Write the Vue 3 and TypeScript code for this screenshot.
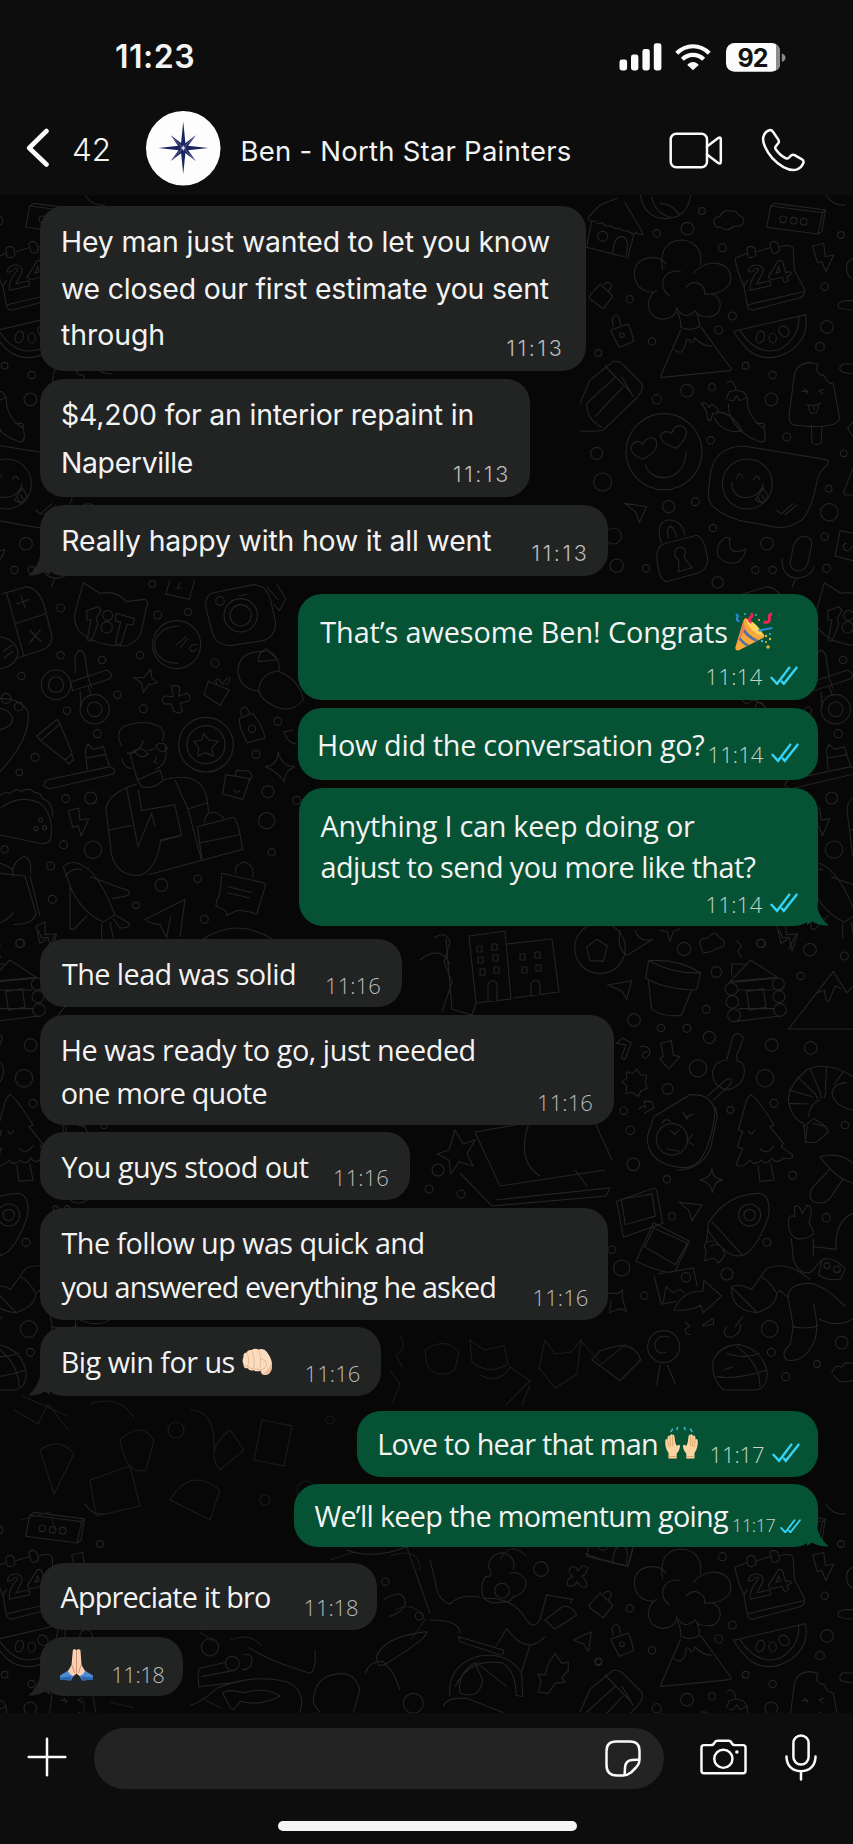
<script setup lang="ts">
import { onMounted, ref } from 'vue'

type Emoji = 'party' | 'fist' | 'hands' | 'pray'

interface Line {
  text: string
  width: number
}

interface Message {
  mine?: boolean
  inter?: boolean
  tail?: boolean
  small?: boolean
  gap: number
  width: number
  height: number
  padX: number
  baseline: number
  lineHeight: number
  lines: Line[]
  emoji?: Emoji
  emojiGap?: number
  time: string
  timeWidth: number
  metaRight: number
  metaBottom: number
}

const messages: Message[] = [
  {
    inter: true, gap: 11, width: 546, height: 165, padX: 21, baseline: 46, lineHeight: 46.5,
    lines: [
      { text: 'Hey man just wanted to let you know', width: 489 },
      { text: 'we closed our first estimate you sent', width: 488 },
      { text: 'through', width: 104 },
    ],
    time: '11:13', timeWidth: 58, metaRight: 21.5, metaBottom: 15.5,
  },
  {
    inter: true, gap: 8, width: 490, height: 118, padX: 21, baseline: 45.5, lineHeight: 47.5,
    lines: [
      { text: '$4,200 for an interior repaint in', width: 413 },
      { text: 'Naperville', width: 132 },
    ],
    time: '11:13', timeWidth: 58, metaRight: 19, metaBottom: 15,
  },
  {
    inter: true, tail: true, gap: 8, width: 568, height: 71, padX: 21.3, baseline: 45.3, lineHeight: 46,
    lines: [{ text: 'Really happy with how it all went', width: 430 }],
    time: '11:13', timeWidth: 58, metaRight: 18.5, metaBottom: 15,
  },
  {
    mine: true, gap: 18, width: 519.5, height: 106, padX: 22.3, baseline: 48.2, lineHeight: 42,
    lines: [{ text: 'That’s awesome Ben! Congrats', width: 407.5 }],
    emoji: 'party', emojiGap: 7,
    time: '11:14', timeWidth: 57, metaRight: 20, metaBottom: 15,
  },
  {
    mine: true, gap: 8, width: 520, height: 72, padX: 19.5, baseline: 46.7, lineHeight: 42,
    lines: [{ text: 'How did the conversation go?', width: 387.5 }],
    time: '11:14', timeWidth: 56, metaRight: 19, metaBottom: 17.3,
  },
  {
    mine: true, tail: true, gap: 8, width: 519, height: 138, padX: 22, baseline: 47.7, lineHeight: 41.3,
    lines: [
      { text: 'Anything I can keep doing or', width: 374 },
      { text: 'adjust to send you more like that?', width: 435 },
    ],
    time: '11:14', timeWidth: 57, metaRight: 20, metaBottom: 13.3,
  },
  {
    gap: 13, width: 361.5, height: 68, padX: 22, baseline: 44.7, lineHeight: 42,
    lines: [{ text: 'The lead was solid', width: 234 }],
    time: '11:16', timeWidth: 56, metaRight: 20.5, metaBottom: 13.3,
  },
  {
    gap: 8, width: 573.5, height: 109.5, padX: 20.8, baseline: 44.7, lineHeight: 43,
    lines: [
      { text: 'He was ready to go, just needed', width: 415 },
      { text: 'one more quote', width: 206 },
    ],
    time: '11:16', timeWidth: 56, metaRight: 20.5, metaBottom: 14,
  },
  {
    gap: 7.5, width: 369.5, height: 68, padX: 21.5, baseline: 44.7, lineHeight: 42,
    lines: [{ text: 'You guys stood out', width: 247 }],
    time: '11:16', timeWidth: 56, metaRight: 20.5, metaBottom: 14,
  },
  {
    gap: 8, width: 568, height: 112, padX: 21.5, baseline: 45, lineHeight: 44,
    lines: [
      { text: 'The follow up was quick and', width: 363 },
      { text: 'you answered everything he asked', width: 434.5 },
    ],
    time: '11:16', timeWidth: 56, metaRight: 19.5, metaBottom: 14.3,
  },
  {
    tail: true, gap: 7, width: 341, height: 69, padX: 20.8, baseline: 45, lineHeight: 42,
    lines: [{ text: 'Big win for us', width: 174 }],
    emoji: 'fist', emojiGap: 7.5,
    time: '11:16', timeWidth: 56, metaRight: 20.5, metaBottom: 14,
  },
  {
    mine: true, gap: 15, width: 460.5, height: 66, padX: 20.3, baseline: 43.3, lineHeight: 42,
    lines: [{ text: 'Love to hear that man', width: 280.5 }],
    emoji: 'hands', emojiGap: 7,
    time: '11:17', timeWidth: 55, metaRight: 18, metaBottom: 14.3,
  },
  {
    mine: true, tail: true, small: true, gap: 7, width: 523.5, height: 63, padX: 20.5, baseline: 42, lineHeight: 42,
    lines: [{ text: 'We’ll keep the momentum going', width: 413.5 }],
    time: '11:17', timeWidth: 43.5, metaRight: 17, metaBottom: 14,
  },
  {
    gap: 16, width: 337, height: 67, padX: 20.5, baseline: 44, lineHeight: 42,
    lines: [{ text: 'Appreciate it bro', width: 210 }],
    time: '11:18', timeWidth: 55, metaRight: 18.5, metaBottom: 14.3,
  },
  {
    tail: true, gap: 7, width: 143, height: 59, padX: 20, baseline: 41, lineHeight: 42,
    lines: [], emoji: 'pray', emojiGap: 0,
    time: '11:18', timeWidth: 53, metaRight: 18.7, metaBottom: 13.3,
  },
]

function bubbleVars(m: Message) {
  const drop = m.inter ? 9.3 : 10.1
  return {
    '--gap': `${m.gap}px`,
    '--w': `${m.width}px`,
    '--h': `${m.height}px`,
    '--pad-x': `${m.padX}px`,
    '--pad-top': `${m.baseline - m.lineHeight / 2 - drop}px`,
    '--lh': `${m.lineHeight}px`,
    '--emoji-gap': `${m.emojiGap ?? 0}px`,
    '--meta-right': `${m.metaRight}px`,
    '--meta-bottom': `${m.metaBottom}px`,
  }
}

const root = ref<HTMLElement | null>(null)

/* Tracks every text run so that it fills its measure. */
function fitText() {
  root.value?.querySelectorAll<HTMLElement>('[data-measure]').forEach((el) => {
    const measure = Number(el.dataset.measure)
    const count = (el.textContent ?? '').length
    el.style.letterSpacing = '0px'
    const natural = el.getBoundingClientRect().width
    el.style.letterSpacing = `${(measure - natural) / count}px`
  })
}

onMounted(fitText)

const dotsRight: number[][] = [
  [366, 63, 10], [230, 130, 11], [322, 116, 19], [427, 173, 12], [149, 328, 11], [734, 290, 11],
  [457, 378, 12], [416, 420, 12], [216, 454, 11], [741, 411, 19], [720, 470, 13], [55, 489, 10],
  [497, 527, 10], [578, 555, 11], [321, 602, 19], [396, 592, 11], [230, 628, 14], [574, 628, 19],
  [50, 790, 18], [392, 751, 11], [620, 741, 12], [68, 876, 27], [791, 790, 10], [746, 896, 10],
  [748, 967, 26], [266, 950, 18], [346, 935, 12], [100, 1038, 24], [399, 1014, 11], [561, 1061, 19],
  [110, 1127, 20], [198, 1135, 11], [526, 1140, 11], [578, 1140, 11], [734, 1040, 11],
  [740, 1135, 12], [413, 1177, 17], [783, 135, 10],
]
const dotsLeft: number[][] = [
  [182, 84, 12], [457, 12, 10], [473, 105, 12], [564, 96, 10], [182, 226, 11], [306, 240, 11],
  [420, 225, 11], [645, 249, 12], [64, 288, 11], [352, 344, 11], [201, 392, 11], [430, 386, 12],
  [292, 461, 12], [105, 532, 12], [58, 577, 10], [768, 523, 12], [833, 424, 12], [197, 656, 12],
  [272, 654, 18], [804, 635, 18], [890, 661, 12], [800, 722, 24], [191, 794, 12], [279, 809, 26],
  [14, 808, 11], [152, 858, 12], [815, 817, 11], [593, 896, 11], [484, 915, 19], [157, 958, 12],
  [408, 976, 10], [613, 1018, 12], [61, 1090, 13],
]
const dotsLower: number[][] = [
  [312, 57, 20], [542, 40, 12], [690, 59, 19], [793, 78, 12], [409, 126, 16], [662, 138, 11],
  [379, 238, 12], [162, 270, 19], [243, 294, 11], [321, 295, 12], [388, 322, 18], [575, 345, 19],
  [692, 354, 19], [354, 415, 26], [555, 445, 26], [263, 477, 16], [582, 520, 12], [451, 540, 10],
  [795, 585, 11], [131, 542, 11], [151, 601, 13], [160, 703, 19], [638, 736, 12], [261, 748, 11],
  [276, 859, 11], [739, 863, 12], [561, 937, 12], [95, 959, 11], [441, 1032, 18], [193, 1097, 11],
  [569, 1197, 25], [785, 1238, 19], [574, 1267, 12], [711, 1302, 10], [617, 1340, 12], [125, 1014, 24],
]
</script>

<template>
  <div ref="root" class="phone">
    <header class="top">
      <div class="status">
        <span class="clock"><span data-measure="80">11:23</span></span>
        <svg class="status-icons" viewBox="0 0 170 30" aria-hidden="true">
          <g fill="#fbfbfb">
            <rect x="0.5" y="16.5" width="7.6" height="11" rx="2.4" />
            <rect x="12" y="11.5" width="7.4" height="16" rx="2.4" />
            <rect x="23.4" y="6" width="7.4" height="21.5" rx="2.4" />
            <rect x="34.8" y="0.3" width="7.6" height="27.2" rx="2.4" />
            <path d="M74 27.3 68.7 22.2Q68.3 21.6 69 21 74 17.2 79 21 79.7 21.6 79.3 22.2Z" />
            <rect x="107" y="0" width="54" height="28.8" rx="8.5" />
          </g>
          <g fill="none" stroke="#fbfbfb" stroke-width="4.2">
            <path d="M57.8 10.3C67 .9 81 .9 90.2 10.3" />
            <path d="M63.3 16.3C69.5 10.4 78.5 10.4 84.7 16.3" />
          </g>
          <path d="M157 1.4Q161 3.4 161 8v13q0 4.6-4 6.4Z" fill="#8b8b8b" />
          <path d="M162.800 10.500q3.700 1.200 3.700 4.200t-3.700 4.200Z" fill="#8b8b8b" />
          <text x="133.5" y="23.5" text-anchor="middle" class="percent">92</text>
        </svg>
      </div>
      <div class="bar">
        <svg class="back" viewBox="0 0 24 40" aria-hidden="true">
          <path d="M20.5 3 3.2 20 20.5 36.5" />
        </svg>
        <span class="unread"><span data-measure="39">42</span></span>
        <svg class="avatar" viewBox="0 0 74 74" aria-hidden="true">
          <circle cx="37" cy="37" r="37" fill="#fdfdfd" />
          <g fill="#1d2560">
            <path d="M24.6 24.2 36.5 33 40.5 37 49.4 49.6 37.5 40.6 33.5 37Z" />
            <path d="M49.4 24.2 40.5 36.5 37 40.5 24.6 49.6 33.4 37.5 37 33.5Z" />
            <path d="M37 10.5 39.4 34.3 62 36.8 39.4 39.2 37 62.5 34.6 39.2 12.3 36.8 34.6 34.3Z" />
          </g>
          <path d="M37 36.8 26 26M37 36.8l11-11M37 36.8 26 48M37 36.8 48 48" stroke="#7c83ad" stroke-width=".7" />
          <path d="m37 33.8.8 2.200 2.200.8-2.200.8-.8 2.200-.8-2.200-2.200-.8 2.200-.8Z" fill="#dfe2f2" />
        </svg>
        <span class="name"><span data-measure="331">Ben - North Star Painters</span></span>
        <svg class="video" viewBox="0 0 54 38" aria-hidden="true">
          <rect x="1.7" y="1.7" width="36.3" height="33.5" rx="5.5" />
          <path d="M38 14.5 49.2 6q2.600-1.500 2.600 1.300v22.400q0 2.800-2.600 1.300L38 22.5" />
        </svg>
        <svg class="call" viewBox="0 0 44 44" aria-hidden="true">
          <path d="M2.5 8.5Q4 3.6 8.3 2.3 10.6 1.6 12 3.8L17.3 11.6Q18.5 13.5 17.2 15.3L14.8 18.2Q13.7 19.7 14.7 21.2 18.8 27.3 25 30.3 26.5 31 27.9 29.7L30.2 27.4Q31.7 26.1 33.6 27.1L41 31.3Q43.2 32.7 42.3 35.1 40.6 39.5 36.2 41.4 30.4 43.5 22.5 39.2 9.5 31.5 3.9 18.5 1.2 12.5 2.5 8.5Z" />
        </svg>
      </div>
    </header>

    <main class="chat">
      <svg class="wallpaper" viewBox="0 195 853 1518" aria-hidden="true">
        <defs>
          <g id="tile">
            <g transform="translate(580 190) scale(.33333)">
              <circle v-for="(d, i) in dotsRight" :key="i" :cx="d[0]" :cy="d[1]" :r="d[2]" />
              <path d="M24 82 60 45 112 25M24 82q6 18 20 10q8 14 22 6q12 16 26 8q12 14 26 8q12 14 26 8q10 14 24 6q14 10 20 2L182 118 134 35M34 96 20 172 143 203 162 132M98 190q4-52 28-50q24 4 12 56" />
              <circle cx="68" cy="139" r="15" />
              <path d="M181 15q12 70 76 71q66-2 75-71M215 20q10 50 56 62M240 40q35 0 60 36" />
              <path d="M402 98q-4-18 18-18q10-24 34-16q16-4 22 12q20 6 14 22q-8 14-28 10q-20 20-38 4q-20 2-22-14Z" />
              <path d="M572 48 728 68 714 132 560 112ZM572 48l14-8 150 20-8 8M736 60 726 124l-12 8" />
              <circle cx="610" cy="88" r="10" /><circle cx="641" cy="92" r="10" /><circle cx="671" cy="95" r="10" />
              <path d="M248 240C240 190 252 152 304 150 350 152 370 190 360 225M258 222C240 195 200 200 178 215 145 250 170 310 220 306M340 250C370 215 420 208 446 240 470 290 420 315 372 312M230 300C195 320 195 380 245 388 280 386 290 370 290 352M396 312C430 320 430 375 390 380 365 382 350 375 345 362M270 318C235 300 240 235 302 244M318 292C340 265 378 280 374 315M290 355Q315 395 345 362M292 365Q304 390 302 412M348 365Q360 390 358 410M302 412Q330 425 358 410M302 420 242 558Q240 563 246 562L450 542Q456 540 452 534L362 410M282 478q10 10 22 8q16-18 14-38q10-4 14 10q10 0 12-14q30 28 52 24" />
              <path d="M465 205 502 190 501 175q12-12 24 0l3 20q-10 12-22 6L502 190M530 185l40-12M569 160q12-12 24 0l6 20q-8 14-22 8ZM600 170q38-10 40 10L643 240 672 295q6 22-12 28L520 360q-14 2-18-14L492 290Q470 240 465 205M492 290q8-20 12-18M504 344 670 305" />
              <path d="M505 245q4-22 28-20q26 8 10 34l-12 22 36-8q8 6 4 14l-60 14q-4-30 24-60q2-10-10-4q-8 12-20 8ZM565 260l30-48q12-4 14 8l8 28q16-6 18 4l-14 8 4 12q-8 8-14 2l-4-12-34 8ZM588 250l12-4-4-16Z" />
              <path d="M698 168 731 160 736 200 761 195 738 244 725 215 712 218ZM461 424 676 374Q690 440 632 482 560 525 505 480 478 454 461 424ZM480 422Q530 500 600 478 660 440 656 380" />
              <ellipse cx="541" cy="441" rx="12" ry="18" transform="rotate(18 541 441)" />
              <ellipse cx="578" cy="444" rx="11" ry="15" /><ellipse cx="612" cy="424" rx="14" ry="17" transform="rotate(-45 612 424)" />
              <path d="M62 280 28 318q-2 6 6 12l36 26 27-35q0-6-8-12L62 284M70 284q14-14 24 0q2 8-10 20M92 420 145 402Q160 440 160 455L118 472Q100 440 92 420ZM100 410l-4-24q14-18 22-2l4 22" />
              <circle cx="126" cy="436" r="7" />
              <path d="M0 640 30 570 100 514Q120 512 130 525L185 580Q194 600 165 629L70 720Q50 725 0 723M75 528 155 610M108 560 20 640Q20 690 66 712M130 590 45 680M160 620 125 560" />
              <circle cx="252" cy="785" r="114" />
              <path d="M188 808Q145 790 156 765 172 745 188 762 200 738 225 746 245 780 188 808ZM290 775Q240 760 242 735 252 718 275 730 282 705 305 708 340 725 290 775ZM196 822C205 875 310 890 319 786" />
              <path d="M440 578Q460 562 468 600M438 628 448 605 468 600 490 606 502 622 480 632 470 618 460 632 446 630M446 640C440 700 500 745 548 757Q562 745 552 715 500 680 502 625M528 700l20 0q12 8 0 14M362 640q20-6 24 12l10-10 18 14-4 16-12-2-6 22-10-4-2-22Q375 650 362 640M410 665Q460 670 486 722 430 735 402 682" />
              <path d="M643 555Q650 520 690 518L714 523Q704 545 722 555 734 552 738 570 746 580 760 582L778 680Q780 700 750 706 700 714 650 706 625 705 628 670ZM694 706 696 758Q710 770 724 758L726 706M665 604l20 0M672 596l12 10-6 6M716 602l16-4M730 612l-14-10M678 644Q700 650 724 640M686 646q0 26 14 24q16 0 14-26M702 646v14" />
              <path d="M390 860Q400 770 490 768L735 808Q752 810 740 826 714 850 712 870 695 960 665 990 630 1015 590 1012L480 992Q380 960 385 910ZM589 960 604 972 640 940M614 975 652 944M456 876C452 940 540 935 550 880M470 868q4-30 20-4M520 872q8-26 20-2M526 930l24-36 14 24q-12 30-38 12M534 922l12 20M544 914l10 16" />
              <circle cx="502" cy="882" r="75" />
              <path d="M134 940 200 950 178 997 166 965ZM244 1060Q225 1000 262 990 305 988 315 1035M266 1046Q256 1010 275 1010 285 1020 290 1042M250 1062 350 1036Q375 1045 383 1108 380 1145 350 1150L260 1175Q235 1170 230 1100 232 1070 250 1062ZM284 1095q0-24 20-24q20 6 8 32l24 30-40 12q2-30-2-38Q284 1102 284 1095M438 1042Q405 1060 414 1098 440 1130 476 1115 500 1090 496 1078 470 1090 455 1080 445 1070 450 1045ZM640 1070Q650 1040 675 1038 700 1045 694 1070L682 1125Q670 1145 650 1142 625 1135 632 1110ZM606 1105Q605 1160 650 1165 695 1160 703 1130M648 1164 636 1192M780 1022 819 1030M780 1022 765 1098 819 1112M800 1060q-16 0-6 20q14 8 24-12" />
              <path d="M819 205q-25 10-18 40q5 20 18 22M819 332h-25q-25 5-18 20q10 8 43 8M819 522h-30q-16 10-6 22q10 6 36 8M819 695l-16 20 16 25M819 835l-28 70q0 10 10 10h18M738 15q20 34 60 30" />
            </g>
            <g transform="translate(0 580) scale(.33333)">
              <circle v-for="(d, i) in dotsLeft" :key="i" :cx="d[0]" :cy="d[1]" :r="d[2]" />
              <path d="M5 42 80 20Q115 25 132 75L156 170Q155 205 110 215L50 235M20 40 72 230M42 132 136 102M48 72l42-14M62 46l14 38M88 150l36 36M122 148l-34 42M0 170q50 10 54 50q-8 40-54 46M10 215l26-20M10 235l30-22" />
              <path d="M250 8 300 40Q350 30 380 65L430 58Q450 60 440 80L425 150Q420 180 380 198 280 200 235 150 215 120 230 80ZM260 92l35-12 8 12-14 22 4 20-20 50-12-4 12-60-12 0ZM348 100l56 16-6 20-16-4-20 62-16-2 16-66-16-2Z" />
              <circle cx="323" cy="106" r="15" /><circle cx="320" cy="142" r="17" />
              <path d="M510 0 497 42 568 58 584 0M540 6l-8 20 12-4" />
              <path d="M640 38 760 14Q800 15 812 60L827 130Q825 170 790 182L690 197Q645 195 635 150L617 80Q615 45 640 38ZM716 48l26-6M800 20 835 60M830 12l28 44-20 36-18-20" />
              <circle cx="722" cy="106" r="50" /><circle cx="722" cy="106" r="32" /><circle cx="660" cy="63" r="13" />
              <circle cx="530" cy="194" r="72" /><path d="M535 250C440 250 440 140 538 138M528 196l30-26M540 204l24-30M595 195q-26-6-26 12q8 14 22 0" />
              <circle cx="168" cy="314" r="44" /><circle cx="168" cy="314" r="23" /><circle cx="284" cy="388" r="44" /><circle cx="284" cy="388" r="22" />
              <path d="M226 280 225 230Q240 195 254 225L264 290M212 306 320 270Q342 280 330 296L218 332ZM262 286l14 40M240 334l4 48M264 316l10 32" />
              <path d="M452 268 456 295 472 308 446 314 430 337 424 308 402 294 432 292ZM514 318q20-4 26 6l-4 24 26-8q14 8 4 24l-26 6 8 22q-10 12-26 2l-8-22-22 0q-10-12 0-24l28 2ZM625 304 688 330 660 376 612 344ZM650 312q-8-18 6-14l12 14q14-22 22-18q-4 20-14 20" />
              <path d="M795 215Q720 210 713 270 720 330 775 333M800 212Q840 225 838 275M776 333Q780 280 835 273 900 300 910 360 880 395 840 385 785 365 776 333ZM775 245q0-32 24-38l34 32Z" />
              <path d="M110 468 172 418 180 432 122 482ZM122 482 195 540M180 432l36 86M195 540l10 12 16-12-6-18ZM140 600 330 560Q350 566 340 582L150 626Q120 620 140 600ZM262 570 256 510 264 492 280 508 310 500 328 558M258 534l58-10" />
              <path d="M365 500Q345 460 370 440 430 415 480 440 500 460 486 484M380 520Q420 520 430 480M366 535q4 30 30 30M390 520 412 600M496 500Q505 540 480 560L468 566M400 512q30-14 44 10q-20 20-44-10M466 496q26-16 36 8q-16 26-36-8M444 512l22-6M470 530l-8 16 12 4" />
              <path d="M412 600 480 570 490 600Q460 630 425 620ZM410 612Q320 640 318 690L334 820Q350 890 420 886 470 870 482 780L545 765Q530 700 524 674L425 692 415 630M490 600Q600 570 620 650L626 696M525 600 565 690 604 838M326 750 396 736M380 625 414 800 455 700 465 740M484 782 540 768M565 686l56-18M445 884 728 808Q715 720 700 712L592 740 606 838M596 790l122-26M614 730Q615 690 650 698L672 714" />
              <circle cx="618" cy="494" r="82" /><circle cx="618" cy="494" r="57" /><path d="m612 460 14 20 28 4-18 20 4 24-24-10-22 10 2-26-14-18 24-4Z" />
              <path d="M718 415 758 400Q790 440 795 474L742 488Q715 440 718 415ZM724 408l-2-18q14-18 22 0l6 12M677 584 750 596 728 658 668 642ZM708 590q-6-26 16-16q20-8 32 10q0 16-12 18M700 630q10 12 20 2M834 515Q845 560 885 560 855 570 852 606 835 575 796 560 835 555 834 515ZM880 450l-28 6q12 34 36 36" />
              <circle cx="756" cy="446" r="11" />
              <path d="M0 355q60 0 84 40q10 80-84 180M0 385q30 4 38 30q0 26-38 34" /><circle cx="18" cy="355" r="15" /><circle cx="56" cy="380" r="13" />
              <path d="M0 685Q60 640 120 670 160 700 153 770 150 795 120 790L0 765M0 645q20-14 30-4q20-20 34-6q20-16 40 2q20 0 24 20q30 6 30 54" /><circle cx="122" cy="720" r="6" /><circle cx="108" cy="746" r="6" /><circle cx="134" cy="743" r="6" />
              <path d="M205 692 236 684 240 720 266 716 244 768 234 738 218 742ZM190 860Q215 835 255 860 300 890 345 1004L310 1026Q250 1000 215 930ZM196 890q20-30 50-20M270 890 385 932Q395 945 370 950L335 956M210 920 210 1046 222 1048 262 1006M345 1004 388 1030Q390 1045 360 1044L340 1016M305 1030v46M330 1026l10 50" />
              <path d="M0 880 75 888 108 1000Q100 1030 60 1032L40 1034M90 888 120 1010M40 890Q30 850 70 830 95 830 92 880M0 1030Q36 1010 40 996M40 870q-30-20-40-20" />
              <path d="M665 880 790 908Q800 912 794 925L770 1002Q730 990 710 992L680 1006Q680 990 668 988L648 978 650 960Q662 950 665 880ZM684 920l74 18M682 938l68 16M706 880q-2-30 30-34q30 14 22 46" />
              <path d="M555 958 436 1018Q450 1032 480 1034L500 1072 512 1010M555 958 540 1070M108 1038 134 1026 136 1064 166 1062 142 1110M108 1038l12 52 20-12M610 1077q100-66 206 0" />
            </g>
            <g transform="translate(580 930) scale(.33333)">
              <circle v-for="(d, i) in dotsLower" :key="i" :cx="d[0]" :cy="d[1]" :r="d[2]" />
              <circle cx="60" cy="55" r="76" /><path d="M50 28 82 48 70 94 30 92 20 52ZM120 0q-10 60 22 76M165 0q10 36 50 30M220 26 142 76" />
              <path d="M240 0 262 6 270 34 280 4 300-4M362 50q-10-24 20-26q24-26 34-2q24 8 14 28q-20 4-24 8q-20 14-38 8ZM598 0l10 24 20-2 8 40 18-52M470 32l14 16-10 16 12 20" />
              <path d="M206 92Q290 85 362 128L350 180Q260 180 197 145ZM206 92q80 42 156 36M205 152 215 238Q250 262 304 256L335 180M84 165 155 152 140 208 125 182ZM242 340l32-8 6 44 20 4-34 36-26-28 10-10Z" />
              <path d="M450 155 512 90 592 142ZM455 140v-38h40M470 156 580 145M475 180h105M475 236h110M462 275 600 258M500 184l50-8 8 56-50 8Z" /><circle cx="454" cy="177" r="19" /><circle cx="457" cy="216" r="19" /><circle cx="462" cy="256" r="19" /><circle cx="595" cy="162" r="18" /><circle cx="597" cy="200" r="18" /><circle cx="600" cy="240" r="19" />
              <path d="M819 297H626L760 124 800 188 819 170M712 188l22-8q2 40 12 34l20-46 18 8" />
              <path d="M108 340l20-16 26 14-18 48q-16 4-8-14l10-28ZM180 350q30-6 30 20q-14 26-24 6q4-14 18-10M140 425l18 6 12-14 12 18 18 0-4 22 6 18-20 8-6 16-20-12-18 4 2-24-14-12 14-10ZM178 540q4-16 18-8l-4-18 22 0 8 20-30 16" />
              <path d="M440 390 458 322Q470 300 490 322L478 360 470 372 472 395M440 390Q395 395 398 440 410 480 450 478 500 460 492 410 485 390 472 395M380 500 440 448Q460 440 450 465L398 512M222 560 330 494Q395 490 405 545 400 600 385 640 360 720 300 712 200 700 202 620ZM405 530 412 560 390 660Q360 720 290 720" />
              <circle cx="276" cy="628" r="47" /><path d="M246 580q10-20 28-4M272 600l12 14 14-16M258 656l40 8M308 545l12 22 10-14M318 560l24-8M320 640l18-30M326 636l16 10" />
              <path d="M512 494Q530 500 582 585L570 590 610 640 604 650 638 675Q640 690 610 684 590 705 575 684 560 710 545 690 520 710 510 690 490 715 468 705L488 656 472 650 488 604 475 600 500 510ZM534 706 540 754 582 750 572 700M506 600q6 24 18 0M540 655q20 24 42-8" />
              <path d="M819 440Q740 390 680 420 620 470 626 520 640 570 670 580L678 638 710 636 745 606 738 590 700 565M819 540Q765 530 756 490 760 460 800 458M685 560Q690 520 720 510M626 520l60 2M628 480l70 20M652 440l56 54M690 415l30 72M740 408l-4 76M790 425l-28 40M672 590l28-24M704 488l10 20M720 486l4 20M738 486l-6 18M676 636l6-48M738 590l-40-10" />
              <path d="M720 680Q780 665 819 700M720 680Q760 740 819 760M752 715 700 770Q680 800 700 815 740 830 760 790L790 745M396 714Q396 748 429 749 400 754 398 788 392 756 358 750 394 746 396 714ZM298 817 366 825 336 872 326 840Z" />
              <path d="M110 814 222 774Q230 776 232 790L248 880 130 922ZM124 808l12 76 90-26-10-66ZM220 878 328 934 286 1022Q270 1040 168 994ZM222 894l100 46-36 64-92-54ZM232 1032 340 1014 352 1070M222 1036 244 1122 290 1114M250 1116 258 1070 280 1088 300 1078 316 1090M282 1140Q310 1080 368 1084L372 1052 425 1098 370 1148 362 1126Q330 1145 282 1140Z" /><circle cx="318" cy="1042" r="14" />
              <path d="M384 880Q440 790 540 790 575 800 565 860 530 960 488 976 440 990 384 900ZM396 876 488 976M384 900 378 940M400 934q-30-2-26 20q8 0 0 40M374 994q30-20 40 6q20-20 22-30M390 950q30-20 44 20" /><circle cx="509" cy="855" r="33" /><circle cx="509" cy="855" r="17" />
              <path d="M625 880q0-30 20-20l-2-30q14-10 24 20l14-24q16 0 12 24l-6 30q14 20 14 30-20 20-50 16-26-10-26-46M634 925 640 990Q660 1040 695 1025L725 990M700 925v54M700 950l68 8Q765 870 819 850M455 1070Q480 1060 515 1078L560 1015Q620 990 690 1048M455 1070Q450 1140 530 1148 590 1130 590 1090L600 1082 624 1102M456 1072 530 1146M545 1040q30 20 42 46M624 1102Q625 1060 690 1060 740 1070 796 1130M624 1102 640 1190 630 1245Q600 1270 620 1290 670 1300 700 1240 720 1200 700 1120M636 1190q50 10 80-4M716 1166q60 30 103 0M726 990q30-14 70 26l-14 30q-30 10-66-10Z" /><circle cx="741" cy="1007" r="9" /><circle cx="771" cy="1018" r="10" />
              <circle cx="251" cy="1250" r="48" /><path d="M268 1222q-36-12-44 22q6 34 36 22M240 1305l-10 60M262 1305l24 56M400 1290Q420 1245 480 1244 550 1260 562 1330 560 1380 520 1380H430Q390 1340 400 1290M470 1250Q540 1300 540 1370M410 1340q60 10 150-20M440 1270q50 20 100 0M430 1320l30-10M36 1290 60 1262 110 1248Q165 1240 182 1290L120 1352ZM85 1090h30l12-10 0 24 12 40-20-8-30 12 4-36M315 1175l14 14-14 8q0 20 18 16M368 1184l24-14q10-14 8 12l-30 6ZM440 1190q-20 30 14 32q30-10 28-40M490 1158l-26 34M755 1330q10-30 30-18q10-20 34-12M760 1335q20 30 60 16" />
            </g>
          </g>
        </defs>
        <g class="ink">
          <use href="#tile" />
          <use href="#tile" x="-741" />
          <use href="#tile" x="741" />
          <use href="#tile" y="1309" />
          <use href="#tile" x="-741" y="1309" />
          <g transform="translate(430 1540) scale(.33333)">
            <path d="M420 85q16-14 24 8q12-24 30-10q-4 20-18 26q18 16 14 30q-16 10-28-14q-14 20-30 10q-4-16 16-26q-16-12-8-24Z" />
            <path d="M465 40Q490 55 595 78L608 30M175 80Q180 40 220 38 260 50 250 90M175 80q20 30-8 30q-18 20-8 60q20 26 50 16q34 4 40-16q44-10 38-50q-20-30-50-20M150 172Q90 160 60 192 20 180 15 120L0 60M0 240Q90 240 90 280M160 175Q250 170 290 240 310 270 330 240L350 165 428 178 420 190M345 240 400 198Q430 200 440 225L375 268ZM230 265Q200 320 196 318M230 265Q290 350 345 290M300 315 275 395" />
            <path d="M85 290 220 330Q224 345 210 345L90 305ZM60 470Q50 380 140 350 230 330 275 400L278 470 258 466Q260 400 220 370 120 350 75 440M135 368Q80 400 90 460 150 480 158 420ZM140 368 230 440M40 500Q50 470 110 475L220 518M375 340l20 30 20-4 0 26-20 20 10 14-30 4-20 30-30-4 8-30-8-24 20 4 8-30Z" />
            <path d="M430 300 484 276 476 334 460 312Z" /><circle cx="333" cy="87" r="22" /><circle cx="216" cy="152" r="22" /><circle cx="505" cy="364" r="10" />
          </g>
          <g transform="translate(0 1540) scale(.33333)">
            <path d="M600 385 680 366M604 410 700 392M597 440l120-14M597 440q-6-50 3-55M730 345q26-6 26 14q0 30-30 30M570 495Q600 490 650 445 760 400 860 425 920 450 900 518M668 460Q680 445 730 458 800 440 840 468 780 500 720 484 700 520 690 500ZM745 322Q800 360 930 400 950 390 945 330M1130 350Q1150 290 1280 275 1290 290 1160 370Q1130 390 1130 350ZM1095 400Q1110 360 1150 365L1180 400 1200 450M980 410Q940 430 940 490L960 518M980 410Q1060 380 1080 450L1060 518M1040 30Q1120 60 1220 20L1290 220M1150 180q60-40 66 10q-10 30-50 40" />
            <circle cx="697" cy="370" r="21" /><circle cx="1156" cy="125" r="11" /><circle cx="1258" cy="228" r="12" /><circle cx="630" cy="322" r="26" /><circle cx="1240" cy="490" r="30" />
          </g>
          <path d="M469 936 505 931 511 999 476 1003ZM507 944 552 939 559 992 513 998M477 946h5v6h-5ZM492 944h5v6h-5ZM478 957h5v6h-5ZM493 955h5v6h-5ZM480 969h5v6h-5ZM494 967h5v6h-5ZM520 954h5v6h-5ZM535 952h5v6h-5ZM522 967h5v6h-5ZM536 965h5v6h-5ZM488 1002V984q5-7 9 0v17M531 996v-13q5-6 9 0v12M476 1003l-4 12-20-6-6-70M434 938q12-8 16 4l-6 20 8 20-10 30M420 960q20-16 30 4" />
          <path d="M460 1173 492 1206 606 1196 610 1188 495 1200M475 1132 500 1186 605 1170M475 1132 590 1112 612 1160M530 1120Q515 1160 540 1176M575 1170l12 16M455 1130l8 14 12-4-8 14 6 12-14-4-8 12-2-14-12-6 12-4Z" /><circle cx="438" cy="1170" r="6" /><circle cx="429" cy="1189" r="4" /><circle cx="461" cy="1194" r="4" />
          <g class="faint">
            <path d="M425 1350q20-14 34 2l-4 18q-16 10-28-4ZM470 1340l14 10 20-4 4 18q-20 12-36-2ZM545 1340l10 14 16-2 10-12-4 34-22 14-16-20ZM400 1335q8 14-4 20l6 12M480 1375q20 10 30-8l20 14-24 24M390 1370l10 14-8 20M530 1385l-8 20M580 1340l22 24 24-20M330 1560l24-8M390 1556q30-10 30 14M500 1560q10-20 26-4M395 1610q20-10 30 10l-14 20M200 1632l14 10M230 1640q20-8 32 6M205 1700l16 8M110 1702l24 6M84 1700v14" />
            <path d="M14 1410l24 14 10-20 20 26M22 1396l46 20M90 1404q30-10 44 14M120 1440q20-20 34 0l-8 30q-20 6-26-30M190 1410q26 0 24 40M230 1430l14 20-24 20q-16-20 10-40M262 1420l30 6-8 40-30-6ZM40 1450q20-14 34 4l-20 40ZM90 1480l40-14 10 40-44 10ZM170 1500q20-34 50-10l-10 30ZM20 1520l30-8 6 20" />
            <circle cx="176" cy="1430" r="8" /><circle cx="330" cy="1420" r="4" /><circle cx="306" cy="1490" r="9" /><circle cx="265" cy="1500" r="5" />
          </g>
        </g>
      </svg>

      <section class="thread">
        <article
          v-for="(m, i) in messages"
          :key="i"
          class="bubble"
          :class="{ mine: m.mine, inter: m.inter, small: m.small }"
          :style="bubbleVars(m)"
        >
          <div class="body">
            <p v-for="(line, n) in m.lines" :key="n"><span :data-measure="line.width">{{ line.text }}</span></p>

            <svg v-if="m.emoji === 'party'" class="emoji party" viewBox="0 0 38 39" role="img" aria-label="🎉">
              <path d="M8.5 8.5Q9.5 5.5 11.5 6.5 22 11 29.5 24 29 26 27 26.5L3.5 38.5Q0 39 .3 35.5Z" fill="#f7a93b" />
              <path d="M11.5 7Q20 9 29 23.5 23 24 17.5 18 11.5 12 11.5 7Z" fill="#ffd45a" />
              <path d="M8 13.5Q12 23 23.5 28.3l-3 1.500Q10.5 25 6.8 17.5ZM4.5 23.5Q7.5 29.5 14.5 33l-3 1.500Q6 31 3.5 27Z" fill="#55729d" />
              <path d="M8.5 9 1 34 4.5 27 10 17Z" fill="#ef7b4f" />
              <path d="M16 1.5q2.500 2-.5 4t1 5M28.5 10q6 1.500 6-3-1-5 2.500-5" fill="none" stroke="#ed2456" stroke-width="3" />
              <path d="M.8 2.5q3 .5 1.500 3t2 4M23.5 18.5q6-1 14-2.500" fill="none" stroke="#2a8bd8" stroke-width="2.2" />
              <g fill="#e6b93c"><circle cx="31" cy="24" r="1.2" /><circle cx="35" cy="27" r="1.2" /><circle cx="33" cy="35" r="1.7" /><circle cx="24" cy="8" r="1" /><circle cx="31" cy="30" r="1" /></g>
              <g fill="#3bb5d8"><circle cx="27" cy="29" r="1.2" /><circle cx="21" cy="3" r="1" /><circle cx="35" cy="22" r="1" /><circle cx="10" cy="2" r="1" /></g>
            </svg>
            <svg v-else-if="m.emoji === 'fist'" class="emoji fist" viewBox="0 0 32 28" role="img" aria-label="👊🏻">
              <path d="M1.5 9Q1 4.5 5 4.3 5.5 1.3 10 1.7 13-.8 17 1.2 23-.5 25.5 3.5 30.5 10 31 16 31.5 22 28.5 25.5 25 28.5 21.5 27 20 26 19.5 23 15 24.5 12 22.5 7.5 23.5 6 20.5 1.5 21 1.5 16.5-.3 12.5 1.5 9Z" fill="#fbdcbf" />
              <path d="M5 5Q8 9 6 19M10.5 3Q13.5 9 12 20M17 2.5Q20.5 8 18.5 20M2 17.5Q10 22 19.5 22 25 21 25.5 16 24.5 11.5 20 11M19.5 23q0 3 2 4" fill="none" stroke="#e0b08d" stroke-width=".8" />
              <path d="M30.5 14q2 9-4 12.500l-5 .5Q28 22 30.5 14Z" fill="#edbd9b" />
            </svg>
            <svg v-else-if="m.emoji === 'hands'" class="emoji hands" viewBox="0 0 33 32" role="img" aria-label="🙌🏻">
              <g id="raised">
                <path d="M3.5 31.5V26Q-.3 21 .3 13.5 1 11 2.3 13L2.7 10Q4 7.5 5 9.5 5.5 6 7.2 7.8 8.8 6.5 9.5 9.5 10.5 20 12.5 18.5 14 16.8 15 18.5 15 23 11.7 26.5V31.5Z" fill="#fbd5a0" />
                <path d="M2.5 13.5 4 20M5 10l.7 9.500M7.4 8.500 7.7 19M3.5 29.500h8" fill="none" stroke="#d89c62" stroke-width=".8" />
              </g>
              <use href="#raised" transform="matrix(-1 0 0 1 33 0)" />
              <path d="M6 4.5 7.5 2.2M12 2.5 12.5.5M20 2.5 19.5.5M27 4.5 25.5 2.2" stroke="#38b4d0" stroke-width="1.6" stroke-linecap="round" />
            </svg>
            <svg v-else-if="m.emoji === 'pray'" class="emoji pray" viewBox="0 0 33 32" role="img" aria-label="🙏🏻">
              <path d="M0 26.5 9 21 13.5 27 11 31.5 0 30.5ZM33 26.5 24 21 19.5 27 22 31.5 33 30.5Z" fill="#4b8bd4" />
              <path d="M0 28.5 11.5 27.5 11 31.5 0 30.8ZM33 28.5 21.5 27.5 22 31.5 33 30.8Z" fill="#2f66ad" />
              <path d="M14 0Q16 0 16.5 1.5 17 0 19 0L20.5 1.5 21.5 16 25 22Q23.5 26 19.5 27L16.5 24.5 13.5 27Q9.5 26 8 22L11.5 16 12.8 1.5Z" fill="#fbd0b2" />
              <path d="M16.5 1.5V24.5M12 16l2.500 8M21 16l-2.500 8" fill="none" stroke="#c98d6c" stroke-width=".9" />
            </svg>
          </div>

          <div class="meta">
            <time><span :data-measure="m.timeWidth">{{ m.time }}</span></time>
            <svg v-if="m.mine" class="ticks" viewBox="0 0 29 20" aria-hidden="true">
              <path d="M1.5 12.2 7.3 18.5 20 1.7M12.3 16.2 14.3 18.5 27.5 1.7" />
            </svg>
          </div>

          <svg v-if="m.tail" class="tail" viewBox="0 0 22 30" aria-hidden="true">
            <path d="M12 0V10Q10 21 .3 29.5 9 30 17 25.500L22 29V0Z" />
          </svg>
        </article>
      </section>
    </main>

    <footer class="composer">
      <div class="tools">
        <svg class="plus" viewBox="0 0 40 40" aria-hidden="true"><path d="M20 1.7V38.3M1.7 20H38.3" /></svg>
        <div class="field">
          <svg class="sticker" viewBox="0 0 36 37" aria-hidden="true">
            <path d="M11 1.5H25Q34.5 1.5 34.5 11V19Q34.5 24 31 27.5L26 32.5Q22 35.5 18 35.5H12Q1.5 35.5 1.5 25V11Q1.5 1.5 11 1.5ZM19.5 35.3Q20 31 20 27.5 20.5 20.5 27 20 32 19.8 34.4 19.5" />
          </svg>
        </div>
        <svg class="camera" viewBox="0 0 48 36" aria-hidden="true">
          <path d="M4 6H11Q13.5 6 14.5 3.8 15.5 1.5 17.5 1.5H29Q31 1.5 32 3.8 33 6 35.5 6H43.5Q46 6 46 8.5V32Q46 34.5 43.5 34.5H4Q1.5 34.5 1.5 32V8.5Q1.5 6 4 6Z" />
          <circle cx="23.6" cy="19.8" r="9.2" />
          <circle class="dot" cx="37.3" cy="13" r="1.8" />
        </svg>
        <svg class="mic" viewBox="0 0 32 47" aria-hidden="true">
          <rect x="8.4" y="1.5" width="15.2" height="29" rx="7.6" />
          <path d="M1.5 22.5V23.5Q2.5 36.5 16 37.2 29.5 36.5 30.5 23.5V22.5M16 37.2V45.5" />
        </svg>
      </div>
      <div class="home"></div>
    </footer>
  </div>
</template>

<style>
html,
body {
  background: #0d0d0d;
}
</style>

<style scoped>
.phone {
  width: 853px;
  height: 1844px;
  overflow: hidden;
  display: flex;
  flex-direction: column;
  background: #0d0d0d;
  color: #f3f3f3;
  font-family: Inter, 'Liberation Sans', sans-serif;
}

svg {
  display: block;
  flex: none;
}

.top {
  height: 195px;
  flex: none;
  background: #0d0d0d;
}

.status {
  height: 103px;
  padding: 43px 83px 0 115px;
  box-sizing: border-box;
  display: flex;
  justify-content: space-between;
}

.clock {
  margin-top: 1px;
  font-size: 32px;
  font-weight: 600;
  line-height: 26px;
}

.clock span,
.unread span,
.name span,
p span,
time span {
  display: inline-block;
  white-space: nowrap;
}

.status-icons {
  width: 170px;
  height: 30px;
  margin-right: -19px;
  overflow: visible;
}

.percent {
  font: 700 25px Inter, 'Liberation Sans', sans-serif;
  letter-spacing: -1px;
  fill: #111;
}

.bar {
  height: 90px;
  padding-left: 26px;
  display: flex;
  align-items: center;
}

.back {
  width: 24px;
  height: 40px;
}

.back path,
.video,
.call,
.plus,
.sticker,
.camera,
.mic {
  fill: none;
  stroke: #fafafa;
  stroke-width: 2.5;
  stroke-linecap: round;
  stroke-linejoin: round;
}

.back path {
  stroke-width: 4.6;
}

.unread {
  width: 53px;
  margin-left: 22px;
  margin-top: 3px;
  font-size: 31.5px;
  font-weight: 300;
  line-height: 40px;
}

.avatar {
  width: 74.5px;
  height: 74.5px;
  margin: 1px 0 0 21px;
}

.name {
  width: 400px;
  margin: 5px 0 0 20px;
  font-size: 27.5px;
  line-height: 40px;
}

.video {
  width: 54px;
  height: 38px;
  margin: 5px 0 0 28.5px;
}

.call {
  width: 44px;
  height: 44px;
  margin: 4px 0 0 37.5px;
}

.chat {
  position: relative;
  height: 1518px;
  flex: none;
  background: #070707;
  overflow: hidden;
}

.wallpaper {
  position: absolute;
  inset: 0;
  width: 853px;
  height: 1518px;
}

.ink {
  fill: none;
  stroke: #242424;
  stroke-width: 1.1;
}

.faint {
  stroke: #1b1b1b;
}

.ink g[transform],
#tile g[transform] {
  stroke-width: 3.3;
}

.thread {
  position: relative;
  display: flex;
  flex-direction: column;
  align-items: flex-start;
  padding: 0 35.5px 0 40px;
}

.bubble {
  --fill: #222323;
  position: relative;
  box-sizing: border-box;
  display: grid;
  width: var(--w);
  height: var(--h);
  flex: none;
  margin-top: var(--gap);
  border-radius: 24px;
  background: var(--fill);
  font-family: 'Open Sans', 'Noto Sans', sans-serif;
  font-size: 28.8px;
}

.bubble.mine {
  --fill: #065234;
  align-self: flex-end;
}

.bubble.inter {
  font-family: Inter, 'Liberation Sans', sans-serif;
  font-size: 28.4px;
}

.body,
.meta {
  grid-area: 1 / 1;
}

.body {
  padding: var(--pad-top) 0 0 var(--pad-x);
  display: flex;
  flex-wrap: wrap;
  align-content: flex-start;
  align-items: flex-start;
}

.bubble:not(:has(.emoji)) .body {
  display: block;
}

p {
  margin: 0;
  height: var(--lh);
  line-height: var(--lh);
  white-space: nowrap;
}

.emoji {
  margin-left: var(--emoji-gap);
  overflow: visible;
}

.party {
  width: 38px;
  height: 39px;
  margin-top: 0.5px;
}

.fist {
  width: 31px;
  height: 28px;
  margin-top: 7px;
}

.hands {
  width: 33px;
  height: 32px;
  margin-top: 4px;
}

.pray {
  width: 33px;
  height: 32px;
  margin-top: 2.2px;
}

.meta {
  place-self: end;
  display: flex;
  align-items: flex-end;
  gap: 7px;
  padding: 0 var(--meta-right) var(--meta-bottom) 0;
  color: #bcbcbc;
}

time {
  height: 16px;
  margin-bottom: 1px;
  font-size: 22px;
  font-weight: 300;
  line-height: 16px;
}

.inter time {
  margin-bottom: 0;
  font-size: 21.5px;
}

.mine .meta {
  color: #c3d5cb;
}

.ticks {
  width: 28px;
  height: 19.3px;
  fill: none;
  stroke: #35d3f5;
  stroke-width: 2.5;
  stroke-linecap: round;
}

.small .meta {
  gap: 4px;
}

.small time {
  height: 13px;
  font-size: 18px;
  line-height: 13px;
}

.small .ticks {
  width: 21px;
  height: 14.5px;
}

.tail {
  position: absolute;
  left: -12px;
  bottom: 0;
  width: 22px;
  height: 30px;
  fill: var(--fill);
}

.mine .tail {
  left: auto;
  right: -11px;
  transform: scaleX(-1);
}

.composer {
  flex: none;
  height: 131px;
  background: #0d0d0d;
}

.tools {
  height: 91px;
  padding-left: 26.7px;
  display: flex;
  align-items: center;
}

.plus {
  width: 40px;
  height: 40px;
  margin-top: -3px;
}

.field {
  width: 570px;
  height: 61px;
  margin-left: 27.6px;
  padding-right: 23px;
  box-sizing: border-box;
  border-radius: 30.5px;
  background: #232323;
  display: flex;
  align-items: center;
  justify-content: flex-end;
}

.sticker {
  width: 36px;
  height: 37px;
}

.camera {
  width: 47.5px;
  height: 36px;
  margin: -4px 0 0 35.5px;
}

.dot {
  fill: #fafafa;
  stroke: none;
}

.mic {
  width: 32px;
  height: 47px;
  margin: -3px 0 0 38px;
}

.home {
  width: 299px;
  height: 10px;
  margin: 17px 0 0 278px;
  border-radius: 5px;
  background: #f4f4f4;
}
</style>
